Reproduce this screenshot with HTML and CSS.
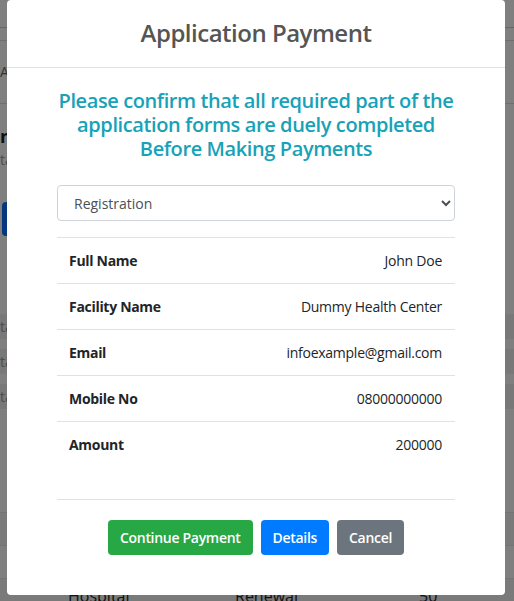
FILE: index.html
```html
<!DOCTYPE html>
<html lang="en">
<head>
  <meta charset="UTF-8" />
  <title>Application Payment</title>
  <meta name="viewport" content="width=device-width, initial-scale=1" />
  <link rel="stylesheet" href="styles.css">
</head>
<body>
  <!-- Page behind the modal -->
  <div class="page">
    <div class="topbar"></div>
    <div class="subbar"></div>
    <div class="crumbs">Applications</div>
    <div class="intro">
      <h2>nApplications</h2>
      <p>tatus of all submitted applications</p>
      <button class="btn-page">New</button>
    </div>
    <ul class="stats">
      <li>tal Registrations</li>
      <li>tal Renewals</li>
      <li>tal Payments</li>
    </ul>
    <table class="list">
      <tr><td>Clinic</td><td>Registration</td><td>20</td></tr>
      <tr><td>Clinic</td><td>Registration</td><td>30</td></tr>
      <tr><td>Hospital</td><td>Renewal</td><td>50</td></tr>
    </table>
  </div>

  <div class="backdrop"></div>

  <!-- Modal -->
  <div class="modal-wrap">
    <div class="modal">
      <div class="modal-header">
        <h4>Application Payment</h4>
      </div>
      <div class="modal-body">
        <h5>Please confirm that all required part of the application forms are duely completed Before Making Payments</h5>
        <select class="form-control">
          <option>Registration</option>
          <option>Renewal</option>
        </select>
        <table class="details">
          <tr><th>Full Name</th><td>John Doe</td></tr>
          <tr><th>Facility Name</th><td>Dummy Health Center</td></tr>
          <tr><th>Email</th><td>infoexample@gmail.com</td></tr>
          <tr><th>Mobile No</th><td>08000000000</td></tr>
          <tr><th>Amount</th><td>200000</td></tr>
        </table>
        <div class="modal-footer">
          <button class="btn btn-success">Continue Payment</button>
          <button class="btn btn-primary">Details</button>
          <button class="btn btn-secondary">Cancel</button>
        </div>
      </div>
    </div>
  </div>
</body>
</html>
```

FILE: styles.css
```css
body {
  margin: 0;
  font-family: 'Open Sans', 'Noto Sans', sans-serif;
  font-size: 14px;
  color: #212529;
  background: #fff;
  overflow: hidden;
}

/* Page behind */
.page {
  height: 601px;
}
.topbar {
  height: 27px;
  border-bottom: 1px solid #ccc;
}
.subbar {
  height: 12px;
  border-bottom: 1px solid #ddd;
}
.crumbs {
  height: 62px;
  line-height: 62px;
  border-bottom: 1px solid #ddd;
  color: #666;
}
.intro {
  box-sizing: border-box;
  padding: 20px 0 0;
  height: 190px;
}
.intro h2 {
  margin: 0;
  font-size: 18px;
  color: #222;
}
.intro p {
  margin: 2px 0 0;
  color: #999;
}
.btn-page {
  margin: 33px 0 0 2px;
  width: 80px;
  height: 34px;
  border: 0;
  border-radius: 4px;
  background: #0d6efd;
  color: #0d6efd;
}
.stats {
  list-style: none;
  margin: 20px 0 0;
  padding: 0;
}
.stats li {
  height: 25px;
  line-height: 25px;
  margin-bottom: 10px;
  background: #f0f0f0;
  color: #999;
}
.list {
  width: 100%;
  margin-top: 103px;
  border-collapse: collapse;
  font-size: 16px;
}
.list td {
  height: 32px;
  padding: 0;
  border-top: 1px solid #e8e8e8;
}
.list tr:nth-child(odd) td {
  background: #f4f4f4;
}
.list td:nth-child(1) { padding-left: 68px; width: 100px; }
.list td:nth-child(2) { padding-left: 67px; width: 118px; }
.list td:nth-child(3) { padding-left: 66px; }
.list tr:last-child td {
  vertical-align: top;
  padding-top: 6px;
}

.backdrop {
  position: fixed;
  top: 0; left: 0; right: 0; bottom: 0;
  background: rgba(0, 0, 0, 0.5);
}

/* Modal */
.modal-wrap {
  position: fixed;
  top: 0; left: 7px;
}
.modal {
  width: 498px;
  background: #fff;
  border-radius: 4px;
}
.modal-header {
  height: 67px;
  border-bottom: 1px solid #dee2e6;
  display: flex;
  align-items: center;
  justify-content: center;
}
.modal-header h4 {
  margin: 0;
  font-size: 24px;
  font-weight: 600;
  letter-spacing: -0.5px;
  color: #555;
  line-height: 1.2;
}
.modal-body {
  padding: 21px 50px 40px;
}
.modal-body h5 {
  margin: 0 0 24px;
  font-size: 20px;
  font-weight: 600;
  letter-spacing: -0.4px;
  line-height: 24px;
  color: #17a2b8;
  text-align: center;
}
.form-control {
  display: block;
  width: 100%;
  height: 36px;
  padding: 6px 12px;
  font-family: inherit;
  font-size: 14px;
  color: #495057;
  background: #fff;
  border: 1px solid #ced4da;
  border-radius: 4px;
}
.details {
  width: 100%;
  margin-top: 16px;
  border-collapse: collapse;
}
.details th,
.details td {
  height: 21px;
  padding: 12px;
  border-top: 1px solid #dee2e6;
  line-height: 21px;
}
.details th {
  text-align: left;
  font-weight: 700;
  letter-spacing: -0.3px;
}
.details td {
  text-align: right;
  padding-right: 13px;
  letter-spacing: -0.25px;
}
.modal-footer {
  margin-top: 32px;
  padding-top: 20px;
  border-top: 1px solid #dee2e6;
  display: flex;
  justify-content: center;
  gap: 8px;
}
.btn {
  height: 35px;
  padding: 0 12px;
  border: 0;
  border-radius: 4px;
  font-family: inherit;
  font-size: 14px;
  font-weight: 600;
  letter-spacing: -0.3px;
  color: #fff;
}
.btn-success { background: #28a745; }
.btn-primary { background: #007bff; }
.btn-secondary { background: #6c757d; }
```
